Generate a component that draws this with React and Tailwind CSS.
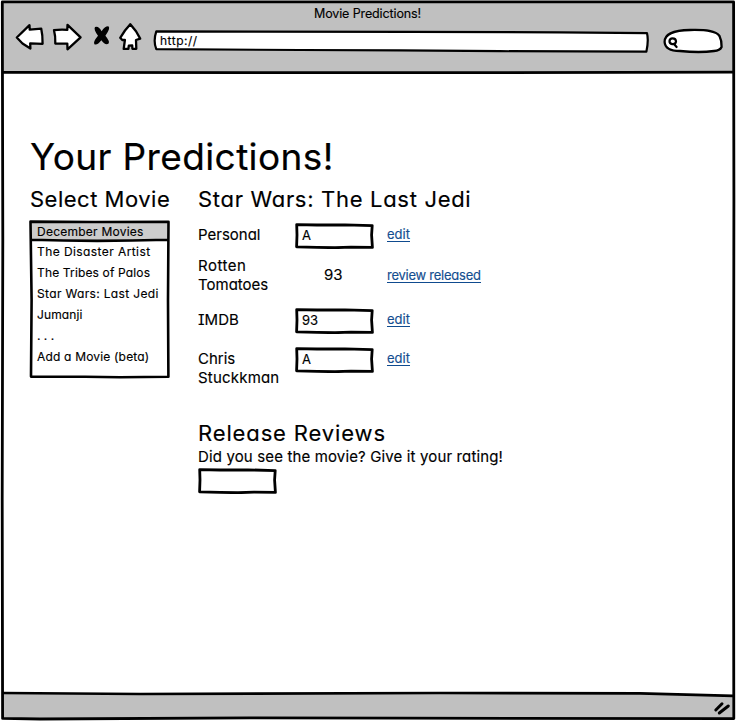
const FONT = "font-['Inter','Liberation_Sans',sans-serif] [font-feature-settings:'cv11','calt'_0] [-webkit-text-stroke:0.15px_currentColor]";

const stroke = {
  fill: "none",
  stroke: "#000",
  strokeLinecap: "round",
  strokeLinejoin: "round",
};

/* Hand-drawn outline of a short text field */
function SketchField({ children }) {
  return (
    <div className="relative h-[26px] w-[79px]">
      <svg className="absolute inset-0 h-full w-full" viewBox="0 0 79 26">
        <path d="M1.7 1.6 L22 2 L50 1.8 L77.2 2.6 L76.6 12 L77.4 24.4 L56 24.2 L40 24.7 L22 24.4 L1.6 23.8 L2 12 Z" {...stroke} fill="#fff" strokeWidth="2.8" />
      </svg>
      <span className="relative block pl-[7px] text-[13px] leading-[25px]">{children}</span>
    </div>
  );
}

function Link({ children, className = "" }) {
  return (
    <a className={"block h-[14px] w-fit border-b border-[#0f4b8f] text-[13px] leading-[13px] whitespace-nowrap text-[#144e90] " + className}>
      {children}
    </a>
  );
}

function Toolbar() {
  return (
    <header className="relative h-[73px] bg-[#c0c0c0]">
      <div className="h-[27px] pl-[314px] text-[12.5px] leading-[27px]">
        <span className="tracking-[-0.12px]">Movie Predictions!</span>
      </div>
      <div className="-mt-[7px] flex h-[36px] items-start">
        <svg className="ml-[14px] h-[36px] w-[130px] shrink-0" viewBox="14 20 130 36">
          <g {...stroke} fill="#fff" strokeWidth="2.3">
            <path d="M16.8 37.5 L29.5 25.2 L29.7 29.6 L41.2 28.6 Q42.7 35 42.6 43.8 L30.2 43.4 L30.4 48.5 L22.5 43.5 Z" />
            <path d="M54 30.2 Q60 29.2 67.3 29.8 L67.5 24.8 L80.6 37.3 L67.5 49.3 L67.3 43.6 L55.3 43.5 Q55.6 36 54 30.2 Z" />
            <path d="M130.3 24.2 L125 30.5 L120.2 37.8 L122.3 40 L124.9 40 L123.7 48.8 L128.4 48.8 L128.8 45.6 L132.2 45.4 L132.4 48.8 L136.3 48.8 L136 40 L140.2 38.6 L136 31.2 Z" />
          </g>
          <path d="M95 27 Q98.6 25.4 101.6 31.2 Q105 26 108.6 26.4 Q110.6 28 105.4 35.8 Q110 41.4 108.6 43.6 Q105.4 46 101.4 40.2 Q97.4 45.4 94.4 44.2 Q92.8 42 98 35.8 Q93.4 29.4 95 27 Z" fill="#000" />
        </svg>
        <div className="relative mt-[9px] ml-[9px] h-[24px] w-[498px]">
          <svg className="absolute inset-0 h-full w-full" viewBox="153 29 498 24">
            <path d="M156.3 31.4 L410 31.8 L560 32.4 L647 33.2 Q648.8 40 646.4 51.6 L500 51.2 L400 50.4 L300 50 L156.3 49.2 Q153 41 156.3 31.4 Z" {...stroke} fill="#fff" strokeWidth="2.2" />
          </svg>
          <span className="relative block pl-[7px] text-[12px] leading-[24px] tracking-[0.5px]">http://</span>
        </div>
        <svg className="mt-[7px] ml-[11px] h-[28px] w-[62px]" viewBox="662 27 62 28">
          <path d="M664.6 42 C664.5 34 673 30.3 690 30 C706 29.6 716 30.6 719.5 36 Q721.8 40.5 721.6 47 Q720 50.6 714 51 C702 52.7 690 52 680 51 C670 51 665 48.5 664.6 42 Z" {...stroke} fill="#fff" strokeWidth="2.3" />
          <path d="M672.4 38.4 Q676 38.4 676 41.6 Q675.6 44.4 672.2 44.2 Q669.3 43.6 669.5 41 Q669.8 38.4 672.4 38.4 Z M674 44 L676.6 47" {...stroke} strokeWidth="2.2" />
        </svg>
      </div>
      <svg className="absolute inset-x-0 bottom-0 h-[4px] w-full overflow-visible" viewBox="0 69 736 4">
        <path d="M3 72.4 L400 72.7 L736 72.2" fill="none" stroke="#000" strokeWidth="2.7" />
      </svg>
    </header>
  );
}

const movies = [
  ["The Disaster Artist", "tracking-[0.42px]"],
  ["The Tribes of Palos", "tracking-[0.15px]"],
  ["Star Wars: Last Jedi", "tracking-[0.34px]"],
  ["Jumanji", "tracking-[0.1px]"],
  [". . .", "tracking-[0px]"],
  ["Add a Movie (beta)", "tracking-[0.18px]"],
];

function MovieList() {
  return (
    <div className="relative mt-[10px] -ml-px h-[159px] w-[141px]">
      <svg className="absolute inset-0 h-full w-full" viewBox="29 220 141 159">
        <path d="M30.5 221.5 L168.5 222 L168.5 240 L30.5 240 Z" fill="#ccc" />
        <path d="M30.5 221.6 L95 222 L168.5 221.8 L168 300 L168.4 376.8 L120 377.3 L85 376.8 L31 376.6 L31.6 300 Z M31 239.8 Q95 242 168 239.8" {...stroke} strokeWidth="2.6" />
      </svg>
      <ul className="relative pl-[8px] text-[12px] whitespace-nowrap">
        <li className="h-[22px] leading-[23px] tracking-[0.24px]">December Movies</li>
        {movies.map(([name, track]) => (
          <li key={name} className={"h-[21px] leading-[20px] " + track}>{name}</li>
        ))}
      </ul>
    </div>
  );
}

function Ratings() {
  return (
    <div className="mt-[13px] grid grid-cols-[97px_92px_auto] grid-rows-[33px_52px_39px_75px] text-[15px] leading-[19px]">
      <div className="pt-[2px]">Personal</div>
      <SketchField>A</SketchField>
      <Link className="mt-[5px]">edit</Link>

      <div><span className="tracking-[0.5px]">Rotten</span><br />Tomatoes</div>
      <div className="pt-[9px] pl-[29px]">93</div>
      <Link className="mt-[13px] tracking-[-0.25px]">review released</Link>

      <div className="pt-[2px] [font-feature-settings:'cv08']">IMDB</div>
      <SketchField>93</SketchField>
      <Link className="mt-[5px]">edit</Link>

      <div className="pt-[2px]">Chris<br /><span className="tracking-[0.2px]">Stuckkman</span></div>
      <SketchField>A</SketchField>
      <Link className="mt-[5px]">edit</Link>
    </div>
  );
}

export default function App() {
  return (
    <div className={"relative flex h-[721px] w-[736px] flex-col overflow-hidden bg-white text-black " + FONT}>
      <Toolbar />
      <main className="flex-1 pt-[64px] pl-[30px]">
        <h1 className="h-[51px] text-[37px] leading-[40px] tracking-[0.38px] whitespace-nowrap [-webkit-text-stroke:0.2px_currentColor]">Your Predictions!</h1>
        <div className="flex">
          <section className="w-[168px] shrink-0">
            <h2 className="text-[22px] leading-[22px] tracking-[0.5px] whitespace-nowrap">Select Movie</h2>
            <MovieList />
          </section>
          <section>
            <h2 className="text-[22px] leading-[22px] tracking-[0.69px] whitespace-nowrap">Star Wars: The Last Jedi</h2>
            <Ratings />
            <h2 className="text-[22px] leading-[22px] tracking-[0.87px]">Release Reviews</h2>
            <p className="mt-[3px] mb-px text-[15px] leading-[20px] tracking-[0.14px]">Did you see the movie? Give it your rating!</p>
            <SketchField />
          </section>
        </div>
      </main>
      <footer className="relative h-[31px]">
        <svg className="absolute inset-0 h-full w-full" viewBox="0 690 736 31">
          <path d="M3 693.5 L200 694 L440 693 L640 693 L733 695.8 L733 718.7 L3 718.5 Z" fill="#c0c0c0" />
          <path d="M3 693 L140 694 L440 693 L640 693.3 L733 695.8" {...stroke} strokeWidth="2.7" />
          <path d="M715.8 710 L722 703.8 M719.3 713 L728.3 706" {...stroke} strokeWidth="3" />
        </svg>
      </footer>
      <svg className="pointer-events-none absolute inset-0 h-full w-full" viewBox="0 0 736 721">
        <path d="M0 0 H736 V721 H0 Z M2 1.5 V718.5 H734.5 V1.5 Z" fill="#fff" fillRule="evenodd" />
        <path d="M2.3 1.9 L733.6 1.9 L733.9 200 L733.5 480 L733.8 718.6 L400 718.2 L250 717.8 L40 719 L2.6 718.4 L2.2 500 L2.8 240 Z" {...stroke} strokeWidth="2.8" />
      </svg>
    </div>
  );
}
